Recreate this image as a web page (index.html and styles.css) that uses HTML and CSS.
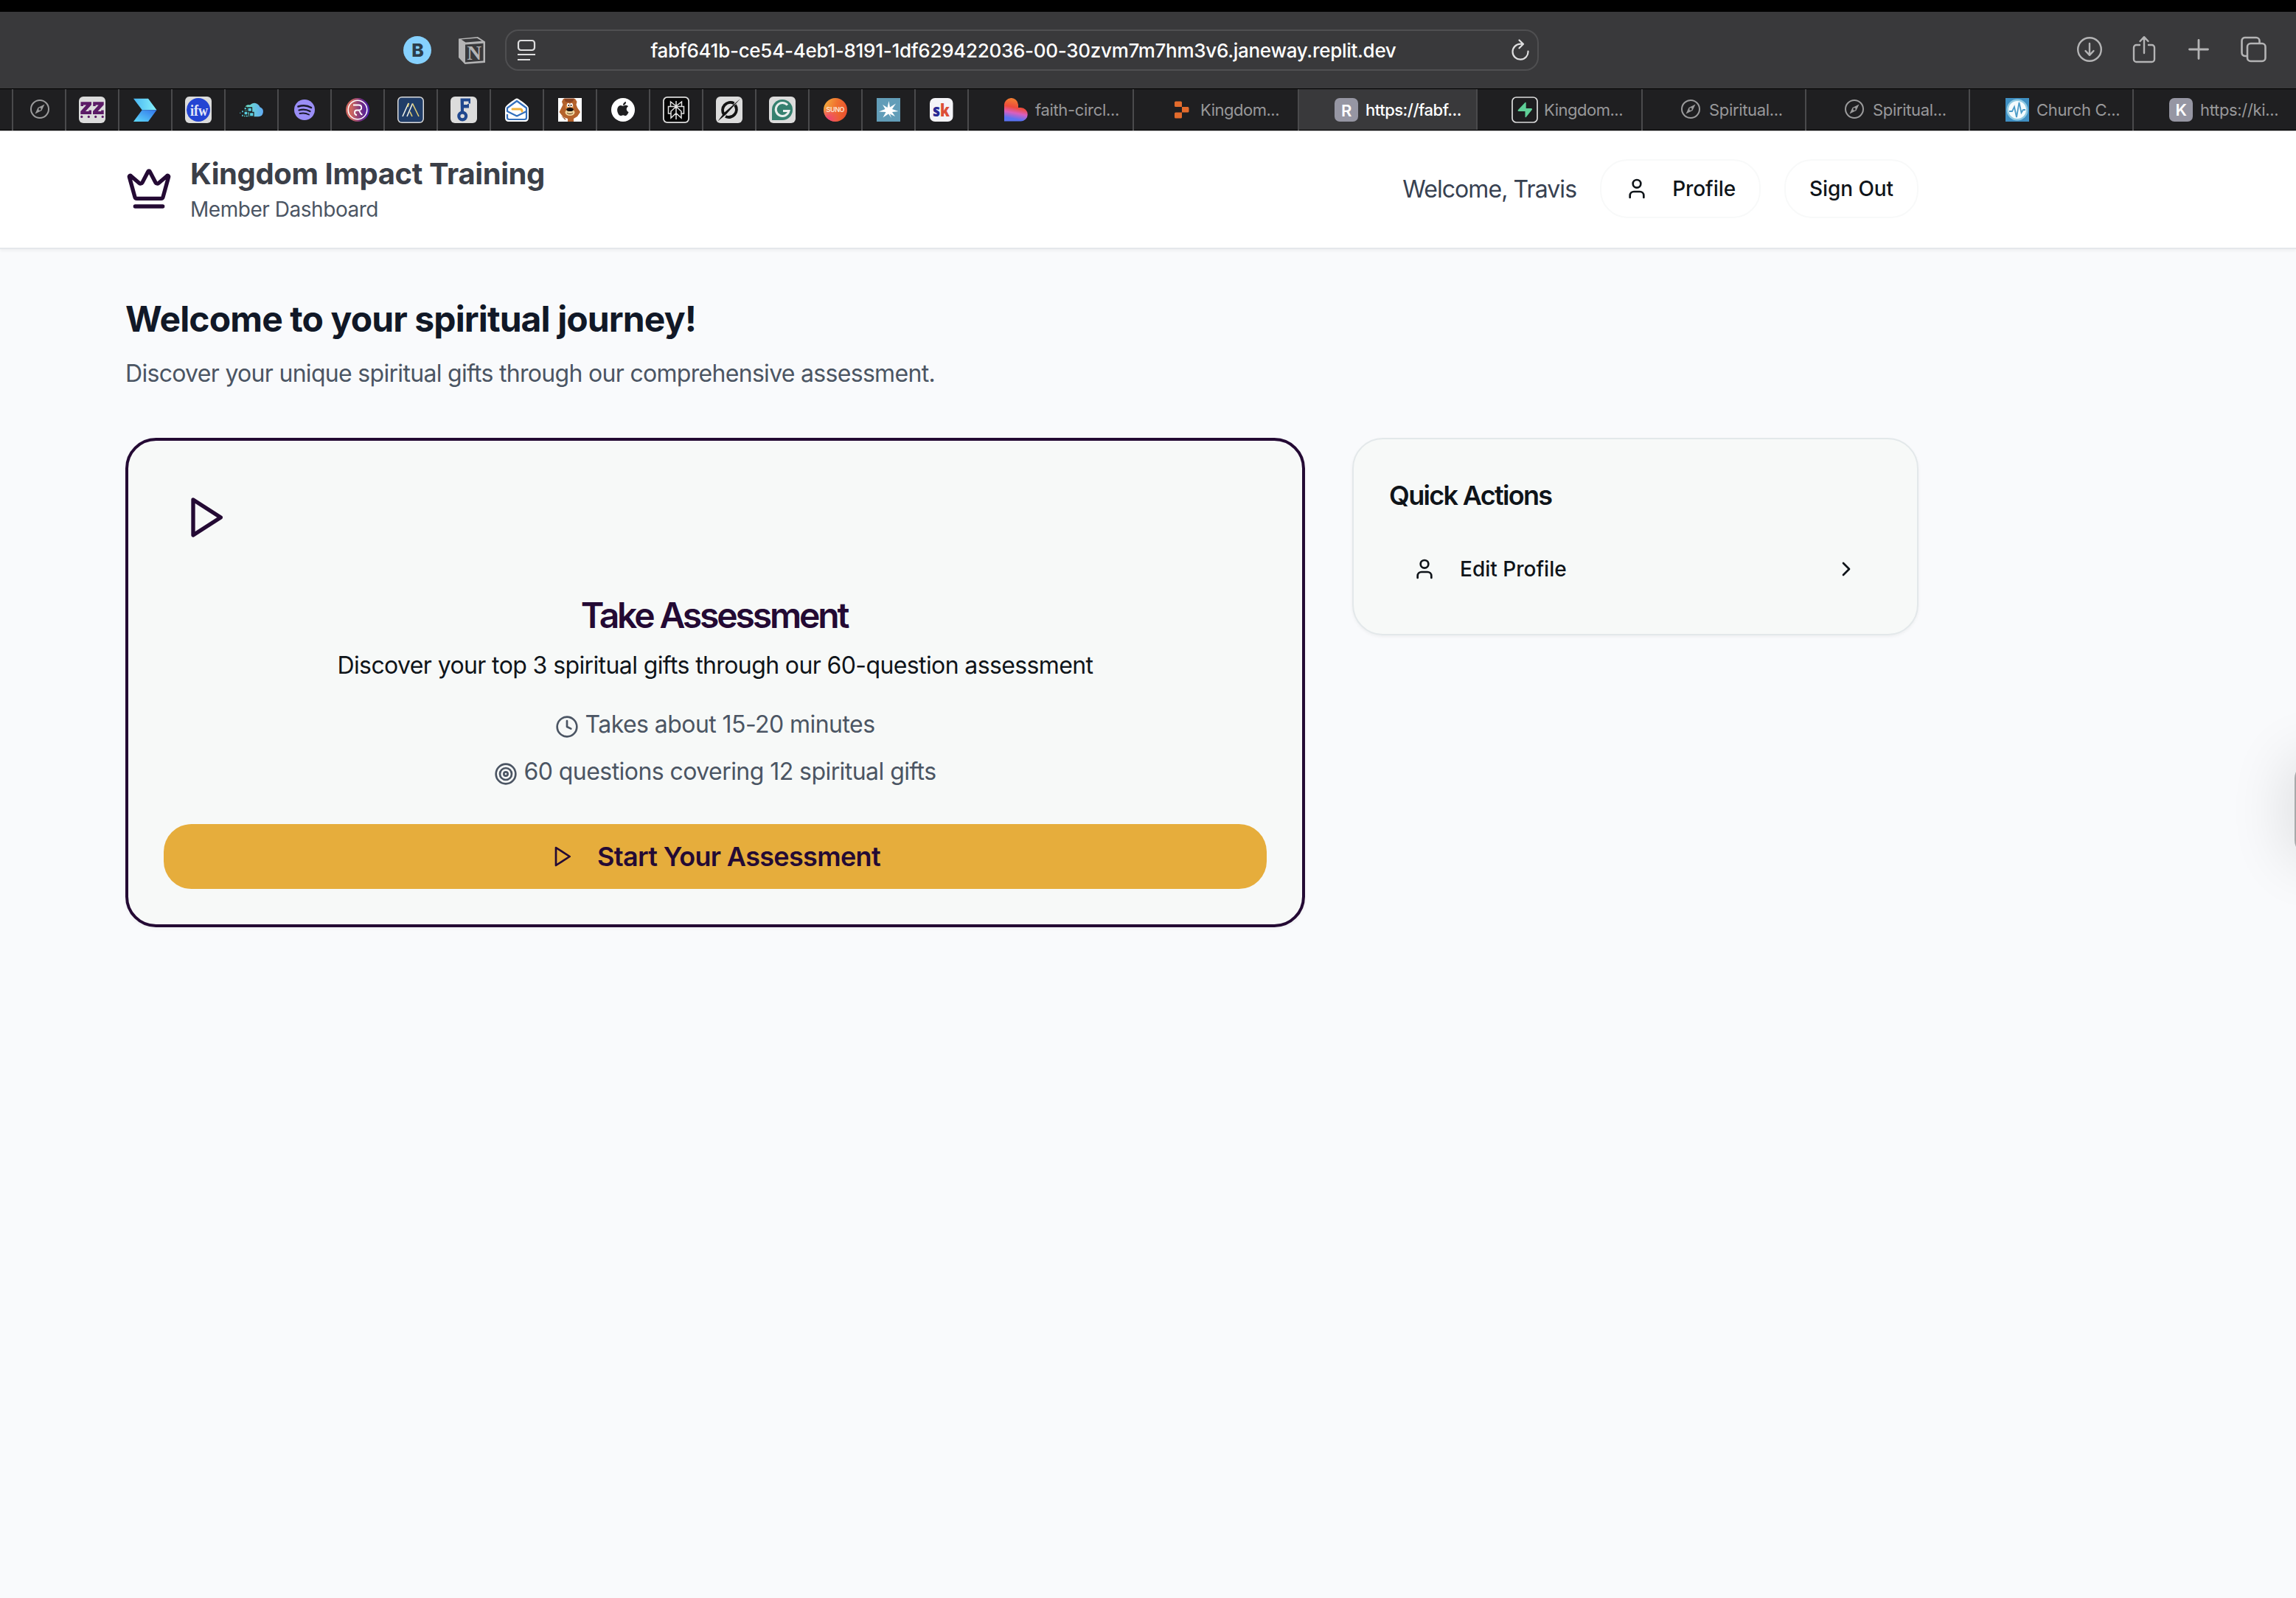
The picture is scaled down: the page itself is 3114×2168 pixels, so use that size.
FILE: index.html
```html
<!DOCTYPE html>
<html lang="en">
<head>
<meta charset="utf-8">
<title>Kingdom Impact Training</title>
<link rel="stylesheet" href="styles.css">
</head>
<body>
<div class="toolbar">
  <div class="ext">
    <svg width="38" height="38" viewBox="0 0 38 38"><circle cx="19" cy="19" r="19" fill="#86d1fe"/><text x="19.5" y="28" text-anchor="middle" font-family="Inter, sans-serif" font-weight="800" font-size="25" fill="#2c3d4a">B</text></svg>
    <svg width="38" height="38" viewBox="0 0 38 38"><path d="M1 3.500 27 1l10 6.500V36L9.500 38 1 29z" fill="#b4b4b5"/><path d="M4.500 4.500 26 2.800l6.500 4L10.500 8.500zM10 11.500l24.500-1.800V33.500L10 35.500z" fill="#39393b"/><text x="22.300" y="31.500" text-anchor="middle" font-family="Liberation Serif, serif" font-weight="700" font-size="27" fill="#b4b4b5">N</text></svg>
  </div>
  <div class="urlbar">
    <svg width="26" height="30" viewBox="0 0 26 30" fill="none" stroke="#dededf" stroke-width="2.200"><rect x="2" y="2" width="22" height="13" rx="3.500"/><path d="M1 21h24M1 28h17"/></svg>
    <span class="url">fabf641b-ce54-4eb1-8191-1df629422036-00-30zvm7m7hm3v6.janeway.replit.dev</span>
    <svg width="26" height="30" viewBox="0 0 26 30" fill="none" stroke="#dededf" stroke-width="2.200" stroke-linecap="round" stroke-linejoin="round"><path d="M23.500 16.500a10.500 10.500 0 1 1-10.500-9.800h3.500M11.500 1.500l5.500 5.300-5.500 5.500"/></svg>
  </div>
  <div class="actions">
    <svg width="36" height="40" viewBox="0 0 36 40" fill="none" stroke="#b4b4b5" stroke-width="2.400" stroke-linecap="round" stroke-linejoin="round"><circle cx="18" cy="19" r="15.800"/><path d="M18 11v15.500M12.500 21l5.500 5.800 5.500-5.800"/></svg>
    <svg width="36" height="40" viewBox="0 0 36 40" fill="none" stroke="#b4b4b5" stroke-width="2.400" stroke-linecap="round" stroke-linejoin="round"><path d="M12 13H7.500A3.500 3.500 0 0 0 4 16.500v16A3.500 3.500 0 0 0 7.500 36h21a3.500 3.500 0 0 0 3.500-3.500v-16a3.500 3.500 0 0 0-3.500-3.500H24M18 24V2.500M12.500 8 18 2.200 23.500 8"/></svg>
    <svg width="36" height="40" viewBox="0 0 36 40" fill="none" stroke="#b4b4b5" stroke-width="2.800" stroke-linecap="round"><path d="M18 6.500v25M5.500 19h25"/></svg>
    <svg width="36" height="40" viewBox="0 0 36 40" fill="none" stroke="#b4b4b5" stroke-width="2.600" stroke-linejoin="round"><rect x="10" y="11" width="24.500" height="24" rx="4.500"/><path d="M10 28H6.500A4.500 4.500 0 0 1 2.500 23.500V7.500A4.500 4.500 0 0 1 6.500 3h15.500A4.500 4.500 0 0 1 26.500 7.500V11"/></svg>
  </div>
</div>

<div class="tabs">
  <div class="edge"></div>
  <div class="pin"><svg class="fav" viewBox="0 0 36 36"><circle cx="19" cy="17" r="12" fill="none" stroke="#9b9b9c" stroke-width="2"/><path fill="#9b9b9c" fill-rule="evenodd" d="M25.500 10.500 21.500 19 12.500 23.500 16.500 15zM19 15.300a1.700 1.700 0 1 0 0 3.400 1.700 1.700 0 0 0 0-3.400z"/></svg></div>
  <div class="pin"><svg class="fav" viewBox="0 0 36 36"><rect width="36" height="36" rx="6" fill="#dcdcdc"/><g fill="#5b1b66"><path d="M2.500 7.300H17v4L9 20h4.500v-1.500H17V24H2.300v-4L10 11.500H6V13H2.500zM19.200 7.300h14.500v4L25.700 20h4.500v-1.500h3.500V24H19v-4l7.700-8.500h-4V13h-3.500z"/><circle cx="3.800" cy="27.400" r="1.600"/><circle cx="13.300" cy="27.400" r="1.600"/><circle cx="22.700" cy="27.400" r="1.600"/><circle cx="32.200" cy="27.400" r="1.600"/></g></svg></div>
  <div class="pin"><svg class="fav" viewBox="0 0 36 36"><defs><linearGradient id="va"><stop offset="0" stop-color="#49b6f2"/><stop offset="1" stop-color="#86f2fb"/></linearGradient><linearGradient id="vb" y1="1" y2="0"><stop offset="0" stop-color="#5edcfb"/><stop offset="1" stop-color="#3273ea"/></linearGradient></defs><path d="M2 2.700h20l11.500 15.600H13.700z" fill="url(#va)"/><path d="M13.700 18.300h19.800L22 34H2z" fill="url(#vb)"/></svg></div>
  <div class="pin"><svg class="fav" viewBox="0 0 36 36"><rect width="36" height="36" rx="6" fill="#dcdcdc"/><circle cx="18" cy="18" r="16" fill="#2344d3"/><text x="19" y="25.500" text-anchor="middle" font-family="Liberation Serif, serif" font-weight="700" font-size="21" fill="#e4e8f8" textLength="24" lengthAdjust="spacingAndGlyphs">ifw</text></svg></div>
  <div class="pin"><svg class="fav" viewBox="0 0 36 36"><defs><linearGradient id="cl"><stop offset="0" stop-color="#6debc0"/><stop offset="1" stop-color="#62abf5"/></linearGradient></defs><path d="M7 27.300h20.500a6.700 6.700 0 0 0 2-13A8 8 0 0 0 16 11.500c-4-1-6.500 1-6.800 4z" fill="url(#cl)"/><g fill="#58cfe0" stroke="#1f1f21" stroke-width="1.300"><path d="M13 15h5.500v5.500H13zM15.500 21.500H21V27h-5.500zM8 20h5v5H8zM8 14.500h3.500V18H8zM4.500 18.500h3V22h-3zM4.500 24h3v3.500h-3zM10 25h3.500v3H10zM1.500 21h2.500v2.500H1.500z"/></g></svg></div>
  <div class="pin"><svg class="fav" viewBox="0 0 36 36"><circle cx="18" cy="18" r="14" fill="#9a8ef6"/><g fill="none" stroke="#1b1a2c" stroke-linecap="round"><path stroke-width="2.600" d="M9.500 13.500c6-2 12.500-1.500 17.500 1.500"/><path stroke-width="2.200" d="M10.500 18.500c5-1.500 10.500-1 15 1.500"/><path stroke-width="1.900" d="M11.500 23c4.500-1 8.500-.7 12.500 1.500"/></g></svg></div>
  <div class="pin"><svg class="fav" viewBox="0 0 36 36"><defs><linearGradient id="rr"><stop offset=".25" stop-color="#cc6660"/><stop offset=".7" stop-color="#6c2a86"/><stop offset="1" stop-color="#4a1fb0"/></linearGradient></defs><circle cx="18" cy="18" r="16" fill="url(#rr)"/><circle cx="18" cy="18" r="12.800" fill="none" stroke="#fff" stroke-width="1.500"/><path d="M12 11.500h7.500c5 0 5 7 0 7h-2.500c-4 0-4 6.500 0 6.500M19 18.500c2.500 0 2 6 5.500 6" fill="none" stroke="#fff" stroke-width="1.800"/></svg></div>
  <div class="pin"><svg class="fav" viewBox="0 0 36 36"><rect width="36" height="36" rx="6" fill="#dcdcdc"/><rect x="1.500" y="1.500" width="33" height="33" rx="4.500" fill="#203d68"/><g fill="none" stroke-width="1.600"><path stroke="#eef0e6" d="M7 27 15 9M13 27 20.500 9.500"/><path stroke="#e3cf74" d="M14 14 15.500 9M17 20.500 20 27M20.500 9.500 29 27"/></g></svg></div>
  <div class="pin"><svg class="fav" viewBox="0 0 36 36"><rect width="36" height="36" rx="6" fill="#dcdcdc"/><path fill="#20488e" d="M13.500 2.500H27v7h-2.500V6.500h-6.500v4.500h5v-1h2v5.500h-7v6.500h-4z"/><circle cx="16.200" cy="26.500" r="4.900" fill="none" stroke="#20488e" stroke-width="4.200"/></svg></div>
  <div class="pin"><svg class="fav" viewBox="0 0 36 36"><path fill="#fff" d="M18 2.500c2 0 12.500 8 14.500 10.500 1 1 1.500 2 1.500 4V29c0 3-2 5-5 5H7c-3 0-5-2-5-5V17c0-2 .5-3 1.500-4C5.500 10.500 16 2.500 18 2.500z"/><path fill="none" stroke="#3470bd" stroke-width="2.200" stroke-linejoin="round" d="M18 6 5 15.500V20l13 6.500L31 20v-4.500zM5 24v4.500c0 1.700 1 2.500 2.500 2.500h21c1.500 0 2.500-.8 2.500-2.500V19"/><path fill="none" stroke="#f1b13b" stroke-width="3" stroke-linecap="round" d="M12 17h10.500c2 0 2.500 1 2.500 3"/></svg></div>
  <div class="pin"><svg class="fav" viewBox="0 0 36 36"><path fill="#fff" d="M2 2h32v32H2z"/><path fill="#b4622c" d="M9 3h16l2.500 4-1 4 1.500 4 4 6-4 6-5 3v4h-8v-4l-6-2-5.500-7 3-6 2-4-1.500-4z"/><path fill="#8c4420" d="M10 2.500h14l-2 4-4 1.500-6-1zM6 26l6 4v2z"/><ellipse cx="17.500" cy="14" rx="5.500" ry="5" fill="#d98a45"/><ellipse cx="15.800" cy="11.500" rx="2" ry="2.700" fill="#fff"/><ellipse cx="20" cy="11.500" rx="2" ry="2.700" fill="#fff"/><circle cx="16.300" cy="12" r=".9"/><circle cx="19.600" cy="12" r=".9"/><ellipse cx="18" cy="21.500" rx="6.500" ry="4.500" fill="#efd59d"/><ellipse cx="18" cy="17.500" rx="4.700" ry="2.600" fill="#17110e"/><path d="M14 22c2 2 6 2 8 0" fill="none" stroke="#553015"/></svg></div>
  <div class="pin"><svg class="fav" viewBox="0 0 36 36"><circle cx="18" cy="18" r="16" fill="#fff"/><path fill="#1f1f21" d="M17.800 12.800c1 0 2.300-1.300 4.500-1 1 .1 2 .5 2.700 1.500-3.500 2.300-2.600 6.500.6 7.800-.8 2.200-2.500 5-4.300 5-1.100 0-1.600-.8-3.200-.8s-2.100.8-3.200.8c-2.700 0-5.500-5.500-4.600-9.600.7-3 3-4.500 4.900-4.400 1.100.1 2 .7 2.600.7zM18 11.800c-.2-2.300 1.600-4.500 4-4.800.3 2.600-1.700 4.900-4 4.800z"/></svg></div>
  <div class="pin"><svg class="fav" viewBox="0 0 36 36"><rect width="36" height="36" rx="6" fill="#dcdcdc"/><rect x="1.800" y="1.800" width="32.400" height="32.400" rx="4.500" fill="#050505"/><g fill="none" stroke="#e0e0e0" stroke-width="1.500"><path d="M18 6v25M18 13 10.500 7v6.500M18 13l7.500-6v6.500M11 23H7.500v-9.500h21V23H25M18 13.500 11 20v9l7-6.500M18 13.500 25 20v9l-7-6.500"/></g></svg></div>
  <div class="pin"><svg class="fav" viewBox="0 0 36 36"><rect width="36" height="36" rx="6" fill="#dcdcdc"/><path fill="none" stroke="#131313" stroke-width="4" d="M26 11.500a10.500 10.500 0 0 1-13 15.500M11 24.500A10.500 10.500 0 0 1 24.500 9.200"/><path fill="#131313" d="M33 3 14 24 2.500 33.500 11 22z"/></svg></div>
  <div class="pin"><svg class="fav" viewBox="0 0 36 36"><rect width="36" height="36" rx="6" fill="#dcdcdc"/><path fill="#35806f" d="M18 4a14 14 0 0 1 0 28H4V18A14 14 0 0 1 18 4z"/><path d="M25 11.500a9 9 0 1 0 2 8h-8" fill="none" stroke="#e8eeec" stroke-width="3"/></svg></div>
  <div class="pin"><svg class="fav" viewBox="0 0 36 36"><defs><linearGradient id="su" x1="0" y1=".3" x2="1" y2=".6"><stop offset="0" stop-color="#f3ab3c"/><stop offset=".5" stop-color="#f0702f"/><stop offset="1" stop-color="#e8502f"/></linearGradient><radialGradient id="sv" cx=".2" cy=".9" r=".5"><stop offset="0" stop-color="#ef3f78"/><stop offset="1" stop-color="#ef3f78" stop-opacity="0"/></radialGradient></defs><circle cx="18" cy="18" r="16" fill="url(#su)"/><circle cx="18" cy="18" r="16" fill="url(#sv)"/><text x="18" y="21" text-anchor="middle" font-family="Inter, sans-serif" font-weight="600" font-size="9" textLength="25" fill="#fbe6d4">SUNO</text></svg></div>
  <div class="pin"><svg class="fav" viewBox="0 0 36 36"><path fill="#629db8" d="M2 2h32v32H2z"/><path fill="#fff" d="m18.500 6 1.500 8.500 8-5-5 7.500 8.500 3-8.500 1 4 6-7-3.500L22 29l-4-5.500-7.500 5 4-7.500L5 20.500l8.500-3.500L10 11l6.500 4z"/></svg></div>
  <div class="pin"><svg class="fav" viewBox="0 0 36 36"><rect x="2" y="2" width="31.500" height="32" rx="7" fill="#f4f4f8"/><text x="6" y="26.500" font-family="Open Sans, sans-serif" font-weight="800" font-size="23" textLength="23" lengthAdjust="spacingAndGlyphs" fill="#2a2a94">s<tspan fill="#dc4f36">k</tspan></text></svg></div>

  <div class="tab w224"><svg class="fav32" viewBox="0 0 32 32"><defs><linearGradient id="lv" x1=".6" y1="0" x2=".4" y2="1"><stop offset=".1" stop-color="#f07a32"/><stop offset=".42" stop-color="#ee4b3c"/><stop offset=".65" stop-color="#d95fc0"/><stop offset=".9" stop-color="#5a72f2"/></linearGradient></defs><path fill="url(#lv)" d="M0 31.500V10a9.500 9.500 0 0 1 19-1v4h3.500a9.200 9.200 0 0 1 0 18.500z"/></svg><span>faith-circl...</span></div>
  <div class="tab w224"><svg class="fav32" viewBox="0 0 32 32"><path fill="#e36b2c" d="M8.500 4.500h7a1.500 1.500 0 0 1 1.500 1.500v6H8.500A1.500 1.500 0 0 1 7 10.500V6A1.500 1.500 0 0 1 8.500 4.500zM17 12h8a1.500 1.500 0 0 1 1.500 1.500V18a1.500 1.500 0 0 1-1.500 1.500h-8zM8.500 19.500H17V26a1.500 1.500 0 0 1-1.500 1.500h-7A1.500 1.500 0 0 1 7 26v-5a1.500 1.500 0 0 1 1.500-1.500z"/></svg><span class="tight">Kingdom...</span></div>
  <div class="tab w242 active"><svg class="fav32" viewBox="0 0 32 32"><rect width="32" height="32" rx="7" fill="#9696a3"/><text x="16" y="24.500" text-anchor="middle" font-family="Inter, sans-serif" font-weight="600" font-size="22" fill="#fff">R</text></svg><span class="tight">https://fabf...</span></div>
  <div class="tab w224"><svg class="fav32 big" viewBox="0 0 36 36"><rect x="1" y="1" width="34" height="34" rx="5.500" fill="#1d1d1f" stroke="#dcdcdc" stroke-width="1.700"/><path fill="#5fcf97" d="M18.500 8c.5-.6 1.200-.3 1.200.5V16h7c1.400 0 1.800 1 1 2l-8 10c-.5.600-1.200.3-1.200-.5V20h-8.500c-1.400 0-1.800-1-1-2z"/></svg><span class="tight">Kingdom...</span></div>
  <div class="tab w222"><svg class="fav32" viewBox="0 0 32 32"><circle cx="17" cy="15" r="12" fill="none" stroke="#9b9b9c" stroke-width="2"/><path fill="#9b9b9c" fill-rule="evenodd" d="M23.500 8.500 19.500 17 10.500 21.500 14.500 13zM17 13.300a1.700 1.700 0 1 0 0 3.400 1.700 1.700 0 0 0 0-3.400z"/></svg><span>Spiritual...</span></div>
  <div class="tab w222"><svg class="fav32" viewBox="0 0 32 32"><circle cx="17" cy="15" r="12" fill="none" stroke="#9b9b9c" stroke-width="2"/><path fill="#9b9b9c" fill-rule="evenodd" d="M23.500 8.500 19.500 17 10.500 21.500 14.500 13zM17 13.300a1.700 1.700 0 1 0 0 3.400 1.700 1.700 0 0 0 0-3.400z"/></svg><span>Spiritual...</span></div>
  <div class="tab w222"><svg class="fav32" viewBox="0 0 32 32"><path fill="#3f8fc2" d="M0 0h32v32H0z"/><circle cx="16" cy="16" r="14.500" fill="#8ec9e2"/><circle cx="16" cy="16" r="12" fill="#f4fbfd"/><path fill="none" stroke="#4c9cc8" stroke-width="1.800" d="M5 18h4l3-6 3 14 3.500-20 3 14 2.500-4h3"/></svg><span>Church C...</span></div>
  <div class="tab w222"><svg class="fav32" viewBox="0 0 32 32"><rect width="32" height="32" rx="7" fill="#9696a3"/><text x="16" y="24" text-anchor="middle" font-family="Inter, sans-serif" font-weight="600" font-size="22" fill="#fff">K</text></svg><span>https://ki...</span></div>
</div>

<header class="header">
  <div class="wrap header-row">
    <div class="brand">
      <svg class="icon i64" viewBox="0 0 24 24"><path d="M11.562 3.266a.5.5 0 0 1 .876 0L15.390 8.870a1 1 0 0 0 1.516.294L21.183 5.500a.5.5 0 0 1 .798.519l-2.834 10.246a1 1 0 0 1-.956.734H5.810a1 1 0 0 1-.957-.734L2.020 6.020a.5.5 0 0 1 .798-.519l4.276 3.664a1 1 0 0 0 1.516-.294z"/><path d="M5 21h14"/></svg>
      <div>
        <div class="brand-title">Kingdom Impact Training</div>
        <div class="brand-sub">Member Dashboard</div>
      </div>
    </div>
    <div class="user">
      <span class="greet">Welcome, Travis</span>
      <button class="btn"><svg class="icon i32" viewBox="0 0 24 24"><path d="M19 21v-2a4 4 0 0 0-4-4H9a4 4 0 0 0-4 4v2"/><circle cx="12" cy="7" r="4"/></svg><span>Profile</span></button>
      <button class="btn"><span>Sign Out</span></button>
    </div>
  </div>
</header>

<main class="wrap main">
  <h1>Welcome to your spiritual journey!</h1>
  <p class="lead">Discover your unique spiritual gifts through our comprehensive assessment.</p>
  <div class="grid">
    <section class="card primary">
      <svg class="icon i64 play" viewBox="0 0 24 24"><path d="m6 3 14 9-14 9z"/></svg>
      <h2>Take Assessment</h2>
      <p class="desc">Discover your top 3 spiritual gifts through our 60-question assessment</p>
      <p class="fact"><svg class="icon i32" viewBox="0 0 24 24"><circle cx="12" cy="12" r="10"/><path d="M12 6v6l4 2"/></svg><span>Takes about 15-20 minutes</span></p>
      <p class="fact"><svg class="icon i32" viewBox="0 0 24 24"><circle cx="12" cy="12" r="10"/><circle cx="12" cy="12" r="6"/><circle cx="12" cy="12" r="2"/></svg><span>60 questions covering 12 spiritual gifts</span></p>
      <button class="start"><svg class="icon i32" viewBox="0 0 24 24"><path d="m6 3 14 9-14 9z"/></svg><span>Start Your Assessment</span></button>
    </section>
    <section class="card quick">
      <h3>Quick Actions</h3>
      <a class="row"><svg class="icon i32" viewBox="0 0 24 24"><path d="M19 21v-2a4 4 0 0 0-4-4H9a4 4 0 0 0-4 4v2"/><circle cx="12" cy="7" r="4"/></svg><span>Edit Profile</span><svg class="icon i32 chev" viewBox="0 0 24 24"><path d="m9 18 6-6-6-6"/></svg></a>
    </section>
  </div>
</main>
<div class="peek"></div>
</body>
</html>
```
FILE: styles.css
```css
* { box-sizing: border-box; }

body {
  margin: 0;
  height: 2168px;
  overflow: hidden;
  background: #f9fafc;
  font-family: Inter, "Liberation Sans", sans-serif;
  color: #0f1419;
  position: relative;
}

h1, h2, h3, p { margin: 0; }
svg { flex: none; display: block; }
span { white-space: nowrap; }

/* Browser toolbar */
.toolbar {
  height: 120px;
  border-top: 16px solid #000;
  background: #39393b;
  display: flex;
  align-items: center;
  padding: 0 40px 0 547px;
}
.ext { display: flex; gap: 36px; width: 138px; }
.urlbar {
  width: 1402px;
  height: 56px;
  border: 2px solid #4f4f51;
  border-radius: 18px;
  display: flex;
  align-items: center;
  justify-content: space-between;
  padding: 0 10px 0 14px;
}
.url { font-size: 26px; font-weight: 500; letter-spacing: -.0111em; color: #fff; }
.actions { display: flex; gap: 38px; margin-left: auto; }

/* Tab strip */
.tabs {
  height: 58px;
  display: flex;
  overflow: hidden;
  background: #1f1f21;
  border-top: 1px solid #000;
  border-bottom: 1px solid #b9b9ba;
  box-shadow: inset 0 -1px 0 #000;
}
.edge { flex: none; width: 18px; border-right: 2px solid #4a4a4c; }
.pin {
  flex: none;
  width: 72px;
  border-right: 2px solid #4a4a4c;
  display: flex;
  align-items: center;
  justify-content: center;
}
.fav { width: 36px; height: 36px; }
.tab {
  flex: none;
  display: flex;
  align-items: center;
  gap: 10px;
  padding-left: 48px;
  border-right: 2px solid #4a4a4c;
  font-size: 22px;
  letter-spacing: -.015em;
  color: #98989a;
}
.tight { letter-spacing: -.022em; }
.w224 { width: 224px; }
.w242 { width: 242px; }
.w222 { width: 222px; }
.tab.active {
  background: #39393b;
  color: #fff;
  font-weight: 500;
  margin-bottom: 1px;
  padding-top: 1px;
}
.fav32 { width: 32px; height: 32px; }
.fav32.big { width: 36px; height: 36px; margin: 0 -2px; }

/* Page header */
.wrap { width: 2432px; margin-left: 170px; }
.header {
  height: 160px;
  background: #fff;
  border-bottom: 2px solid #e5e7eb;
  box-shadow: 0 2px 4px rgba(0, 0, 0, .05);
}
.header-row {
  height: 156px;
  display: flex;
  align-items: center;
  justify-content: space-between;
}
.brand { display: flex; align-items: center; gap: 24px; color: #240a34; }
.brand-title { font-size: 40px; line-height: 56px; font-weight: 700; letter-spacing: -.01em; color: #3b3f48; }
.brand-sub { font-size: 28px; line-height: 40px; letter-spacing: -.0165em; color: #4b5563; }
.user { display: flex; align-items: center; gap: 32px; }
.greet { font-size: 32px; letter-spacing: -.0285em; padding-top: 1px; color: #374151; }
.btn {
  height: 80px;
  padding: 0 32px;
  border: 2px solid #f8f9f9;
  border-radius: 37.6px;
  background: #fff;
  display: flex;
  align-items: center;
  gap: 32px;
  font: 500 28px Inter, sans-serif;
  letter-spacing: -.003em;
  color: #0f1419;
}

.icon {
  fill: none;
  stroke: currentColor;
  stroke-width: 2;
  stroke-linecap: round;
  stroke-linejoin: round;
}
.i64 { width: 64px; height: 64px; }
.i32 { width: 32px; height: 32px; }

/* Dashboard */
.main { padding-top: 63px; }
h1 { font-size: 48px; line-height: 64px; font-weight: 700; letter-spacing: -.0186em; color: #111827; }
.lead { margin-top: 18px; font-size: 32px; line-height: 48px; letter-spacing: -.0217em; color: #4b5563; }
.grid {
  margin-top: 63px;
  display: grid;
  grid-template-columns: 1600px 768px;
  gap: 64px;
  align-items: start;
}
.card {
  background: #f7f9f8;
  border: 2px solid #e3e8ea;
  border-radius: 41.6px;
  padding: 48px;
  box-shadow: 0 2px 4px rgba(0, 0, 0, .05);
}
.primary {
  height: 664px;
  border: 4px solid #240a34;
  display: flex;
  flex-direction: column;
  align-items: center;
  text-align: center;
}
.play { align-self: flex-start; margin: 24px 0 0 24px; color: #240a34; }
h2 { margin-top: 69px; padding-right: 3px; font-size: 48px; line-height: 64px; font-weight: 600; letter-spacing: -.0655em; color: #240a34; }
.desc { margin-top: 12px; font-size: 32px; line-height: 48px; letter-spacing: -.0191em; }
.fact {
  display: flex;
  align-items: center;
  gap: 8px;
  font-size: 32px;
  line-height: 48px;
  letter-spacing: -.0174em;
  color: #4b5563;
  margin-top: 16px;
}
.desc + .fact { margin-top: 32px; }
.fact svg { margin-top: 6px; }
.start {
  margin-top: 47px;
  width: 1496px;
  height: 88px;
  flex: none;
  border: 0;
  border-radius: 37.6px;
  background: #e6ad3c;
  display: flex;
  align-items: center;
  justify-content: center;
  gap: 32px;
  font: 600 36px Inter, sans-serif;
  letter-spacing: -.0184em;
  color: #240a34;
}
.quick { height: 268px; }
h3 { font-size: 36px; line-height: 56px; font-weight: 600; letter-spacing: -.047em; }
.row {
  margin-top: 32px;
  height: 80px;
  padding: 0 32px;
  display: flex;
  align-items: center;
  gap: 32px;
  font-size: 28px;
  font-weight: 500;
}
.chev { margin-left: auto; }

/* Panel resting just past the right edge of the window */
.peek {
  position: absolute;
  left: 3112px;
  top: 1036px;
  width: 60px;
  height: 124px;
  border-radius: 20px;
  background: #a8a9aa;
  box-shadow: 0 0 80px 10px rgba(0, 0, 0, .12);
}
```
